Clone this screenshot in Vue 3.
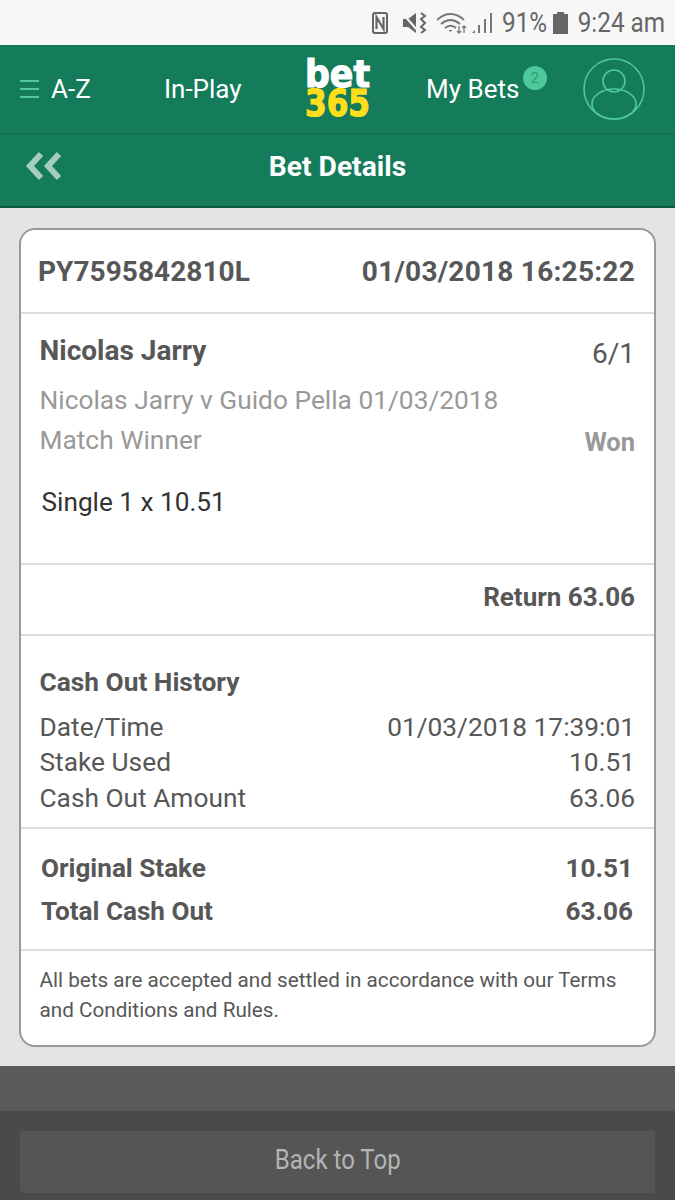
<script setup>
const history = [
  { label: 'Date/Time', value: '01/03/2018 17:39:01' },
  { label: 'Stake Used', value: '10.51' },
  { label: 'Cash Out Amount', value: '63.06' }
]
const totals = [
  { label: 'Original Stake', value: '10.51' },
  { label: 'Total Cash Out', value: '63.06' }
]
</script>

<template>
  <div class="page">
    <div class="status">
      <svg class="ic-nfc" width="16" height="22" viewBox="0 0 16 22">
        <rect x="1" y="1" width="14" height="20" rx="2" fill="none" stroke="#666" stroke-width="2" />
        <path d="M4.5 17V5l7 12V5" fill="none" stroke="#666" stroke-width="2.2" />
      </svg>
      <svg class="ic-mute" width="24" height="22" viewBox="0 0 24 22">
        <path d="M0 7h5l8-6v20l-8-6H0z" fill="#666" />
        <path d="M0 2l15 17" stroke="#f7f7f7" stroke-width="2" />
        <path d="M18 1l4 3-4 3 4 4-4 4 4 3-4 3" fill="none" stroke="#666" stroke-width="2" />
      </svg>
      <svg class="ic-wifi" width="30" height="22" viewBox="0 0 30 22">
        <path d="M0 8c8-8 19-8 27 0M4 12c6-5 13-5 19 0M8 16c3-3 8-3 11 0" fill="none" stroke="#777" stroke-width="1.8" />
        <path d="M13.500 20l-2-2h4z" fill="#777" />
        <path d="M22 14v7M20 19l2 2 2-2M27 21v-7M25 16l2-2 2 2" fill="none" stroke="#777" stroke-width="1.3" />
      </svg>
      <svg class="ic-signal" width="21" height="22" viewBox="0 0 21 22">
        <path d="M0 21l3-3v3z" fill="#777" />
        <path d="M7 21v-8M13 21V7M19 21V1" stroke="#777" stroke-width="2" />
      </svg>
      <span class="st-pct"><span>91%</span></span>
      <svg class="ic-batt" width="15" height="22" viewBox="0 0 15 22">
        <path d="M4 0h7v2h4v20H0V2h4z" fill="#666" />
      </svg>
      <span class="st-time"><span>9:24 am</span></span>
    </div>

    <div class="topbar">
      <div class="nav-az">
        <span class="burger"><i></i><i></i><i></i></span>
        <span>A-Z</span>
      </div>
      <div class="nav-play">In-Play</div>
      <svg class="logo" width="66" height="60" viewBox="0 0 66 60">
        <text x="0" y="28" class="logo-text" fill="#fff" stroke="#fff" textLength="65" lengthAdjust="spacingAndGlyphs">bet</text>
        <text x="0" y="57" class="logo-text" fill="#ffdf1b" stroke="#ffdf1b" textLength="65" lengthAdjust="spacingAndGlyphs">365</text>
      </svg>
      <div class="nav-bets">
        My Bets
        <span class="badge">2</span>
      </div>
      <svg class="avatar" width="62" height="62" viewBox="0 0 62 62">
        <circle cx="31" cy="31" r="30" fill="none" stroke="#4dc99b" stroke-width="1.6" />
        <circle cx="31" cy="23" r="11" fill="none" stroke="#4dc99b" stroke-width="1.6" />
        <ellipse cx="31" cy="46" rx="22" ry="15" fill="none" stroke="#4dc99b" stroke-width="1.6" />
      </svg>
    </div>

    <div class="subbar">
      <svg class="back" width="36" height="30" viewBox="0 0 36 30">
        <path d="M16 3L5 15l11 12M34 3L23 15l11 12" fill="none" stroke="#a3cdbd" stroke-width="6" />
      </svg>
      <div class="subtitle">Bet Details</div>
    </div>

    <div class="content">
      <div class="card">
        <div class="card-head">
          <span>PY7595842810L</span>
          <span class="head-date">01/03/2018 16:25:22</span>
        </div>

        <div class="selection">
          <div class="sel-top">
            <span class="sel-name">Nicolas Jarry</span>
            <span class="sel-odds">6/1</span>
          </div>
          <div class="sel-event">Nicolas Jarry v Guido Pella 01/03/2018</div>
          <div class="sel-market">
            <span>Match Winner</span>
            <span class="won">Won</span>
          </div>
          <div class="sel-single">Single 1 x 10.51</div>
        </div>

        <div class="return">Return 63.06</div>

        <div class="history">
          <div class="hist-title">Cash Out History</div>
          <div v-for="row in history" :key="row.label" class="hist-row">
            <span>{{ row.label }}</span>
            <span>{{ row.value }}</span>
          </div>
        </div>

        <div class="totals">
          <div v-for="row in totals" :key="row.label" class="total-row">
            <span>{{ row.label }}</span>
            <span>{{ row.value }}</span>
          </div>
        </div>

        <div class="terms">All bets are accepted and settled in accordance with our Terms and Conditions and Rules.</div>
      </div>
    </div>

    <div class="footer-top"></div>
    <div class="footer">
      <div class="to-top"><span>Back to Top</span></div>
    </div>
  </div>
</template>

<style>
html, body {
  margin: 0;
  background: #4a4a4a;
}
</style>

<style scoped>
.page {
  width: 675px;
  height: 1200px;
  overflow: hidden;
  font-family: Roboto, "Liberation Sans", sans-serif;
  color: #575757;
}

.status {
  height: 45px;
  background: #f7f7f7;
  display: flex;
  align-items: center;
  justify-content: flex-end;
  padding-right: 10px;
  color: #666;
  font-size: 27px;
  box-sizing: border-box;
}
.ic-nfc {
  margin-right: 15px;
}
.ic-mute {
  margin-right: 10px;
}
.ic-wifi {
  margin-right: 5px;
}
.ic-signal {
  margin-right: 9px;
}
.ic-batt {
  margin: 0 9px 0 6px;
}
.st-pct,
.st-time {
  display: flex;
  justify-content: flex-end;
  white-space: nowrap;
}
.st-pct {
  width: 45px;
}
.st-time {
  width: 88px;
}
.st-pct span,
.st-time span {
  transform: scaleX(0.9);
  transform-origin: right;
}

.topbar {
  height: 90px;
  background: #147b5b;
  border-bottom: 2px solid #116f52;
  box-sizing: border-box;
  display: flex;
  align-items: center;
  color: #fff;
  font-size: 26px;
}
.nav-az {
  display: flex;
  align-items: center;
  margin-left: 20px;
  width: 144px;
}
.burger {
  display: flex;
  flex-direction: column;
  gap: 6px;
  margin-right: 12px;
}
.burger i {
  display: block;
  width: 19px;
  height: 2px;
  background: #4dc99b;
}
.nav-play {
  width: 141px;
}
.logo {
  width: 66px;
  margin-right: 55px;
  overflow: visible;
}
.logo-text {
  font-family: "DejaVu Sans", sans-serif;
  font-weight: 700;
  font-size: 37px;
  stroke-width: 1.2px;
}
.nav-bets {
  width: 157px;
  position: relative;
}
.badge {
  position: absolute;
  left: 97px;
  top: -8px;
  width: 24px;
  height: 24px;
  border-radius: 50%;
  background: #4dc99b;
  color: #2a9c78;
  font-size: 15px;
  line-height: 24px;
  text-align: center;
}

.subbar {
  height: 73px;
  background: #147b5b;
  border-bottom: 2px solid #0d5a43;
  box-sizing: border-box;
  display: flex;
  align-items: center;
  justify-content: center;
  padding-bottom: 8px;
  position: relative;
}
.back {
  position: absolute;
  left: 25px;
  top: 16px;
}
.subtitle {
  color: #fff;
  font-size: 28.2px;
  font-weight: 700;
}

.content {
  height: 858px;
  background: #e4e4e4;
  padding: 20px 19px 0;
  box-sizing: border-box;
}
.card {
  height: 819px;
  background: #fff;
  border: 2px solid #999;
  border-radius: 16px;
  box-sizing: border-box;
  display: flex;
  flex-direction: column;
}
.card-head {
  height: 84px;
  border-bottom: 2px solid #dcdcdc;
  box-sizing: border-box;
  display: flex;
  align-items: center;
  justify-content: space-between;
  padding: 0 19px 0 17px;
  font-size: 28px;
  letter-spacing: 0.05px;
  font-weight: 700;
}
.head-date {
  letter-spacing: 0.25px;
}

.selection {
  height: 251px;
  border-bottom: 2px solid #dcdcdc;
  box-sizing: border-box;
  padding: 20px 19px 0 18.5px;
}
.sel-top {
  display: flex;
  justify-content: space-between;
  align-items: flex-start;
  height: 51px;
}
.sel-name {
  font-size: 28px;
  font-weight: 700;
}
.sel-odds {
  font-size: 28px;
  padding-top: 3px;
}
.sel-event {
  color: #999;
  font-size: 26.3px;
  height: 40px;
}
.sel-market {
  display: flex;
  justify-content: space-between;
  color: #999;
  font-size: 26.3px;
  height: 44px;
}
.won {
  font-weight: 700;
  font-size: 25.5px;
  padding-top: 2px;
}
.sel-single {
  color: #333;
  font-size: 26.2px;
  padding-left: 2px;
  margin-top: 18px;
}

.return {
  height: 71px;
  border-bottom: 2px solid #dcdcdc;
  box-sizing: border-box;
  display: flex;
  align-items: center;
  justify-content: flex-end;
  padding: 0 19px 6px 0;
  font-size: 26px;
  font-weight: 700;
}

.history {
  height: 193px;
  border-bottom: 2px solid #dcdcdc;
  box-sizing: border-box;
  padding: 31px 19px 0 18.5px;
  font-size: 26.3px;
}
.hist-title {
  font-weight: 700;
  height: 42px;
}
.hist-row {
  display: flex;
  justify-content: space-between;
  height: 35.5px;
  align-items: center;
}

.totals {
  height: 122px;
  border-bottom: 2px solid #dcdcdc;
  box-sizing: border-box;
  padding: 17px 21px 0 20px;
  font-size: 26.1px;
  font-weight: 700;
}
.total-row {
  display: flex;
  justify-content: space-between;
  height: 43px;
  align-items: center;
}

.terms {
  padding: 14px 19px 0 18.5px;
  font-size: 20.7px;
  line-height: 30px;
}

.footer-top {
  height: 45px;
  background: #5a5a5a;
}
.footer {
  height: 89px;
  background: #4a4a4a;
  padding: 20px 20px 0;
  box-sizing: border-box;
}
.to-top {
  height: 62px;
  background: #555;
  border-radius: 3px;
  display: flex;
  align-items: center;
  justify-content: center;
  padding-bottom: 4px;
  box-sizing: border-box;
  color: #b4b4b4;
  font-size: 27px;
}
.to-top span {
  transform: scaleX(0.89);
}
</style>
